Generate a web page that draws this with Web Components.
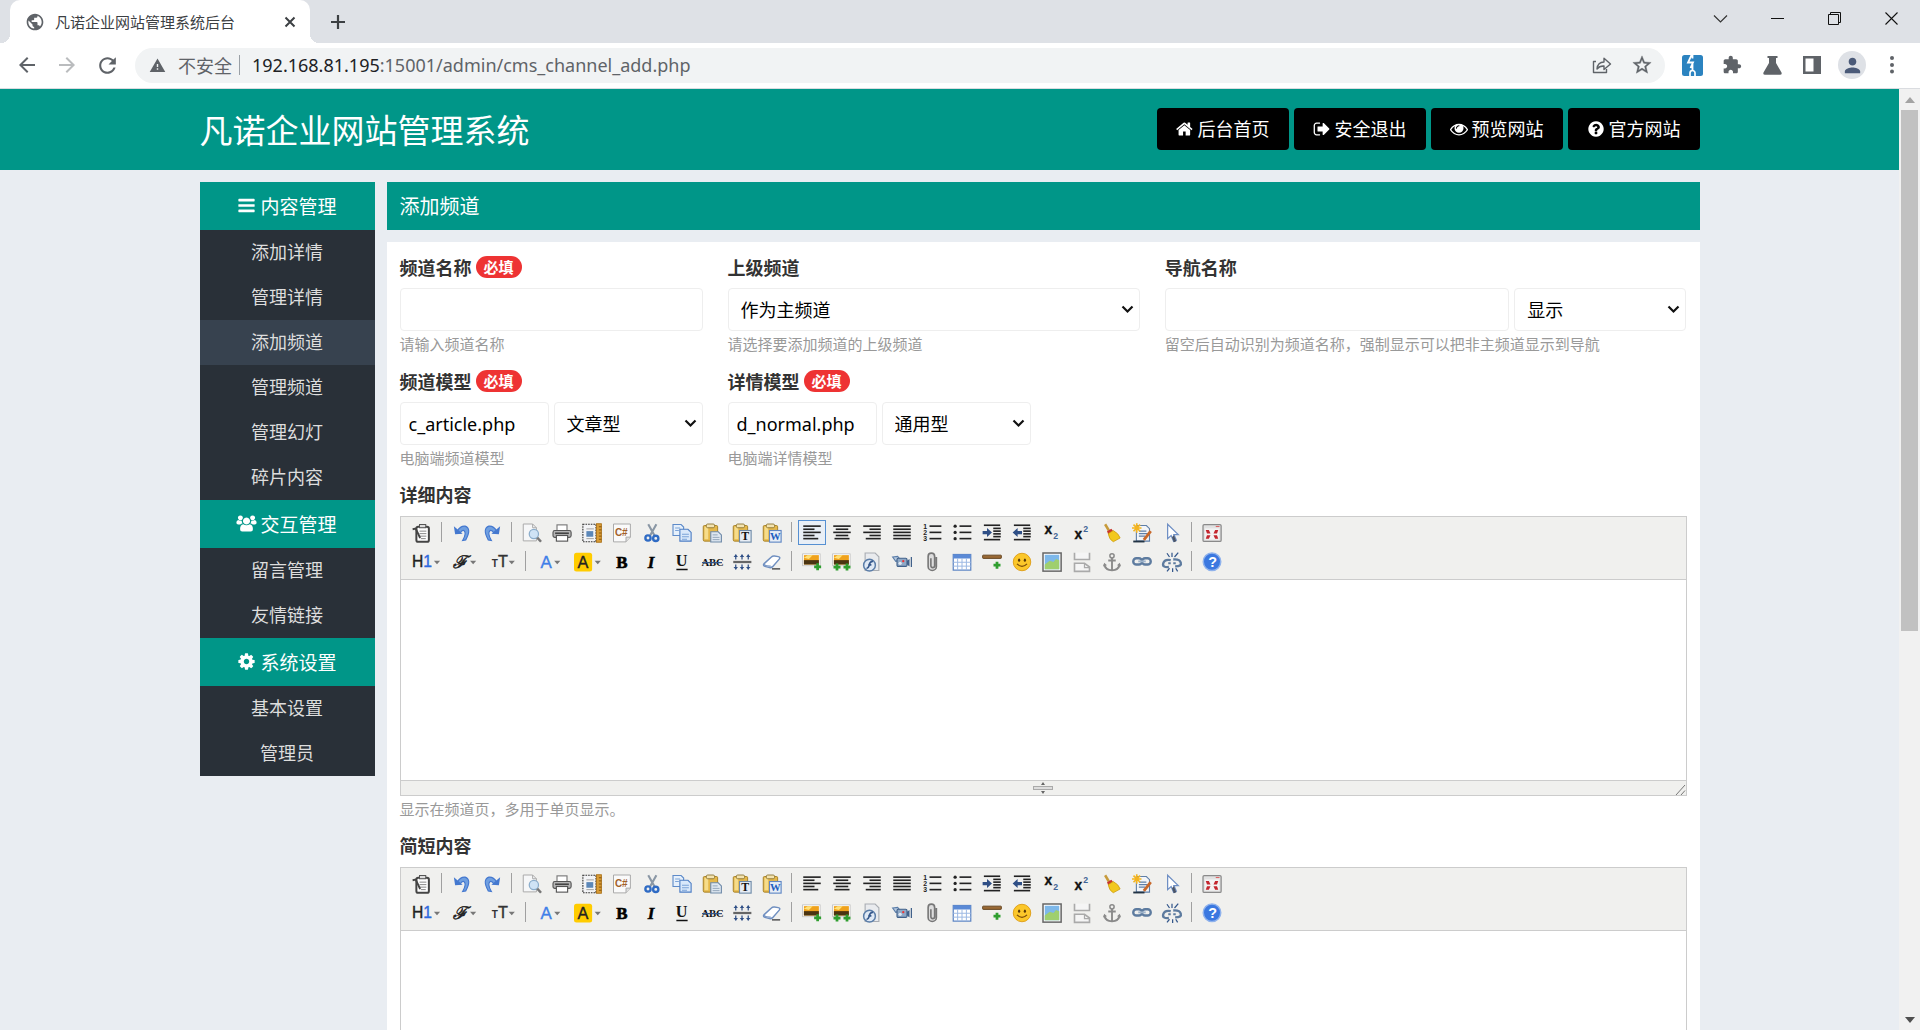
<!DOCTYPE html>
<html lang="zh-CN">
<head>
<meta charset="utf-8">
<title>凡诺企业网站管理系统后台</title>
<style>
html, body { margin: 0; height: 100%; overflow: hidden; }
body { font-family: "Open Sans", "Noto Sans CJK SC", sans-serif; font-size: 18px; color: #333; }
</style>
</head>
<body>
<browser-window>
  <admin-header></admin-header>
  <admin-body></admin-body>
</browser-window>
<script>
const define = (name, html, setup) => customElements.define(name, class extends HTMLElement {
  connectedCallback() {
    if (this.shadowRoot) return;
    const root = this.attachShadow({ mode: 'open' });
    root.innerHTML = '<style>*{box-sizing:border-box}</style>' + (typeof html === 'function' ? html(this) : html);
    if (setup) setup(this, root);
  }
});

/* ---------- solid glyph icons ---------- */
const GLYPHS = {
  home: 'M1408 992v480q0 26-19 45t-45 19h-384v-384h-256v384h-384q-26 0-45-19t-19-45v-480q0-1 .5-3t.5-3l575-474 575 474q1 2 1 6zm223-69l-62 74q-8 9-21 11h-3q-13 0-21-7l-692-577-692 577q-12 8-24 7-13-2-21-11l-62-74q-8-10-7-23.5t11-21.5l719-599q32-26 76-26t76 26l244 204v-195q0-14 9-23t23-9h192q14 0 23 9t9 23v408l219 182q10 8 11 21.5t-7 23.5z',
  bars: 'M1664 1344v128q0 26-19 45t-45 19h-1408q-26 0-45-19t-19-45v-128q0-26 19-45t45-19h1408q26 0 45 19t19 45zm0-512v128q0 26-19 45t-45 19h-1408q-26 0-45-19t-19-45v-128q0-26 19-45t45-19h1408q26 0 45 19t19 45zm0-512v128q0 26-19 45t-45 19h-1408q-26 0-45-19t-19-45v-128q0-26 19-45t45-19h1408q26 0 45 19t19 45z',
  exit: 'M704 1440q0 4 1 20t.5 26.5-3 23.5-10 19.5-20.5 6.5h-320q-119 0-203.5-84.5t-84.5-203.5v-704q0-119 84.5-203.5t203.5-84.5h320q13 0 22.5 9.5t9.5 22.5q0 4 1 20t.5 26.5-3 23.5-10 19.5-20.5 6.5h-320q-66 0-113 47t-47 113v704q0 66 47 113t113 47h312l11.5 1 11.5 3 8 5.5 7 9 2 13.5zm928-544q0 26-19 45l-544 544q-19 19-45 19t-45-19-19-45v-288h-448q-26 0-45-19t-19-45v-384q0-26 19-45t45-19h448v-288q0-26 19-45t45-19 45 19l544 544q19 19 19 45z',
  eye: 'M1664 960q-152-236-381-353 61 104 61 225 0 185-131.5 316.5t-316.5 131.5-316.5-131.5-131.5-316.5q0-121 61-225-229 117-381 353 133 205 333.5 326.5t434.5 121.5 434.5-121.5 333.5-326.5zm-720-384q0-20-14-34t-34-14q-125 0-214.5 89.5t-89.5 214.5q0 20 14 34t34 14 34-14 14-34q0-86 61-147t147-61q20 0 34-14t14-34zm848 384q0 34-20 69-140 230-376.5 368.5t-499.5 138.5-499.5-139-376.5-368q-20-35-20-69t20-69q140-229 376.5-368t499.5-139 499.5 139 376.5 368q20 35 20 69z',
  help: 'M1024 1376v-192q0-14-9-23t-23-9h-192q-14 0-23 9t-9 23v192q0 14 9 23t23 9h192q14 0 23-9t9-23zm256-672q0-88-55.5-163t-138.5-116-170-41q-243 0-371 213-15 24 8 42l132 100q7 6 19 6 16 0 25-12 53-68 86-92 34-24 86-24 48 0 85.5 26t37.5 59q0 38-20 61t-68 45q-63 28-115.5 86.5t-52.5 125.5v36q0 14 9 23t23 9h192q14 0 23-9t9-23q0-19 21.5-49.5t54.5-49.5q32-18 49-28.5t46-35 44.5-48 28-60.5 12.5-81zm384 192q0 209-103 385.5t-279.5 279.5-385.5 103-385.5-103-279.5-279.5-103-385.5 103-385.5 279.5-279.5 385.5-103 385.5 103 279.5 279.5 103 385.5z',
  cog: 'M1152 896q0-106-75-181t-181-75-181 75-75 181 75 181 181 75 181-75 75-181zm512-109v222q0 12-8 23t-20 13l-185 28q-19 54-39 91 35 50 107 138 10 12 10 25t-9 23q-27 37-99 108t-94 71q-12 0-26-9l-138-108q-44 23-91 38-16 136-29 186-7 28-36 28h-222q-14 0-24.5-8.5t-11.5-21.5l-28-184q-49-16-90-37l-141 107q-10 9-25 9-14 0-25-11-126-114-165-168-7-10-7-23 0-12 8-23 15-21 51-66.5t54-70.5q-27-50-41-99l-183-27q-13-2-21-12.5t-8-23.5v-222q0-12 8-23t19-13l186-28q14-46 39-92-40-57-107-138-10-12-10-24 0-10 9-23 26-36 98.5-107.5t94.5-71.5q13 0 26 10l138 107q44-23 91-38 16-136 29-186 7-28 36-28h222q14 0 24.5 8.5t11.5 21.5l28 184q49 16 90 37l142-107q9-9 24-9 13 0 25 10 129 119 165 170 7 8 7 22 0 12-8 23-15 21-51 66.5t-54 70.5q26 50 41 98l183 28q13 2 21 12.5t8 23.5z',
  users: 'M896 330a330 330 0 1 1-.1 0zM320 130a230 230 0 1 1-.1 0zM1472 130a230 230 0 1 1-.1 0zM590 960q140 100 306 100t306-100q300 60 300 470 0 230-200 230h-812q-200 0-200-230 0-410 300-470zM110 570q90 60 210 60 60 0 120-25-5 170 80 290-140 10-210 95h-190q-180 0-180-170 0-200 170-250zM1682 570q-90 60-210 60-60 0-120-25 5 170-80 290 140 10 210 95h190q180 0 180-170 0-200-170-250z'
};
define('glyph-icon', el => `<style>
  :host{display:inline-flex;width:1em;height:1em;flex:none} svg{width:100%;height:100%;overflow:visible}
  </style><svg viewBox="0 0 1792 1792" fill="currentColor" aria-hidden="true"><path d="${GLYPHS[el.getAttribute('name')]}"/></svg>`);

/* ---------- browser frame ---------- */
define('browser-window', `<style>
  :host{display:flex;flex-direction:column;height:100vh;background:#fff}
  .view{flex:1;min-height:0;display:flex}
  .page{flex:1;min-width:0;overflow:hidden;background:#e9edf2}
</style>
<tab-strip></tab-strip><nav-toolbar></nav-toolbar>
<div class="view"><div class="page"><slot></slot></div><page-scrollbar></page-scrollbar></div>`);

define('tab-strip', `<style>
  :host{display:flex;height:43px;background:#dee1e6;color:#3c4043}
  button{border:0;background:none;padding:0;color:inherit;display:flex;align-items:center;justify-content:center}
  .tab{width:300px;margin-left:10px;background:#fff;border-radius:10px 10px 0 0;display:flex;align-items:center;padding:0 10px 0 15px;font-size:15px;position:relative}
  .tab::before,.tab::after{content:"";position:absolute;bottom:0;width:9px;height:9px}
  .tab::before{left:-9px;background:radial-gradient(circle at 0 0,transparent 9px,#fff 9px)}
  .tab::after{right:-9px;background:radial-gradient(circle at 100% 0,transparent 9px,#fff 9px)}
  .tab span{flex:1;margin-left:10px}
  .new{width:30px;margin-left:13px;height:43px}
  .win{margin-left:auto;display:flex;height:37px;color:#111}
  .win button{width:57px}
</style>
<div class="tab">
  <svg width="20" height="20" viewBox="0 0 24 24" fill="#5f6368"><path d="M12 2C6.480 2 2 6.480 2 12s4.480 10 10 10 10-4.480 10-10S17.520 2 12 2zm-1 17.930c-3.950-.490-7-3.850-7-7.930 0-.620.080-1.210.210-1.790L9 15v1c0 1.100.900 2 2 2v1.930zm6.900-2.540c-.260-.810-1-1.390-1.900-1.390h-1v-3c0-.550-.450-1-1-1H8v-2h2c.550 0 1-.450 1-1V7h2c1.100 0 2-.900 2-2v-.410c2.930 1.190 5 4.060 5 7.410 0 2.080-.800 3.970-2.100 5.390z"/></svg>
  <span>凡诺企业网站管理系统后台</span>
  <button aria-label="关闭标签页"><svg width="20" height="20" viewBox="0 0 20 20" stroke="#3c4043" stroke-width="2"><path d="M5.500 5.500l9 9M14.500 5.500l-9 9"/></svg></button>
</div>
<button class="new" aria-label="新标签页"><svg width="16" height="16" viewBox="0 0 16 16" stroke="#3c4043" stroke-width="2.200"><path d="M8 1v14M1 8h14"/></svg></button>
<div class="win">
  <button aria-label="搜索标签页"><svg width="15" height="15" viewBox="0 0 15 15" fill="none" stroke="#333" stroke-width="1.200"><path d="M1 4.500l6.500 6.500L14 4.500"/></svg></button>
  <button aria-label="最小化"><svg width="13" height="13" viewBox="0 0 13 13" fill="none" stroke="#111"><path d="M0 6.500h13"/></svg></button>
  <button aria-label="还原"><svg width="13" height="13" viewBox="0 0 13 13" fill="none" stroke="#111"><path d="M.5 2.500h10v10H.5zM2.500 2.500v-2h10v10h-2"/></svg></button>
  <button aria-label="关闭"><svg width="13" height="13" viewBox="0 0 13 13" fill="none" stroke="#111" stroke-width="1.100"><path d="M.5.5l12 12M12.500.5l-12 12"/></svg></button>
</div>`);

define('nav-toolbar', `<style>
  :host{display:flex;align-items:center;height:46px;padding:0 8px 1px 7px;border-bottom:1px solid #dadce0;color:#5f6368}
  button{border:0;background:none;padding:0;width:40px;height:36px;display:flex;align-items:center;justify-content:center;color:inherit;flex:none}
  .omni{flex:1;min-width:0;height:35px;border-radius:18px;background:#f1f3f4;display:flex;align-items:center;margin:0 7px 0 8px;padding:0 3px 0 14px;font-size:18px}
  .safe{margin:0 7px 0 12px}
  i{width:1px;height:20px;background:#9aa0a6;margin-right:12px}
  .url{flex:1;outline:0;white-space:nowrap;font-family:"Noto Sans",sans-serif;font-size:18px;line-height:24px}
  .url b{font-weight:400;color:#202124}
  .me{width:28px;height:28px;border-radius:50%;background:#dee1e6;display:flex;align-items:center;justify-content:center}
</style>
<button aria-label="后退"><svg width="24" height="24" viewBox="0 0 24 24" fill="#5f6368"><path d="M20 11H7.830l5.590-5.590L12 4l-8 8 8 8 1.410-1.410L7.830 13H20v-2z"/></svg></button>
<button aria-label="前进"><svg width="24" height="24" viewBox="0 0 24 24" fill="#babcbe"><path d="M4 11h12.170l-5.590-5.590L12 4l8 8-8 8-1.410-1.410L16.170 13H4v-2z"/></svg></button>
<button aria-label="重新加载"><svg width="25" height="25" viewBox="0 0 24 24" fill="#5f6368"><path d="M17.650 6.350C16.200 4.900 14.210 4 12 4c-4.420 0-7.990 3.580-7.990 8s3.570 8 7.990 8c3.730 0 6.840-2.550 7.730-6h-2.080c-.820 2.330-3.040 4-5.650 4-3.310 0-6-2.690-6-6s2.690-6 6-6c1.660 0 3.140.690 4.220 1.780L13 11h7V4l-2.350 2.350z"/></svg></button>
<div class="omni">
  <svg width="17" height="17" viewBox="0 0 24 24" fill="#5f6368"><path d="M1 21h22L12 2 1 21zm12-3h-2v-2h2v2zm0-4h-2v-4h2v4z"/></svg>
  <span class="safe">不安全</span><i></i>
  <div class="url" role="textbox" contenteditable="true" spellcheck="false" aria-label="地址栏"><b>192.168.81.195</b>:15001/admin/cms_channel_add.php</div>
  <button aria-label="分享"><svg width="20" height="20" viewBox="0 0 20 20" fill="none" stroke="#5f6368" stroke-width="1.400"><path d="M4 6.500H1.500v11h13V14M5 14c.5-5 3.500-7 7-7V3.200L18.500 9 12 14.500V11c-3.500-.2-5.500 1-7 3z" stroke-linejoin="round"/></svg></button>
  <button aria-label="收藏"><svg width="22" height="22" viewBox="0 0 24 24" fill="#5f6368"><path stroke="#5f6368" stroke-width=".4" d="M22 9.240l-7.190-.620L12 2 9.190 8.630 2 9.240l5.460 4.730L5.820 21 12 17.270 18.180 21l-1.630-7.030L22 9.240zM12 15.400l-3.760 2.270 1-4.280-3.320-2.880 4.380-.380L12 6.100l1.710 4.040 4.380.380-3.320 2.880 1 4.280L12 15.400z"/></svg></button>
</div>
<button aria-label="扩展一"><svg width="21" height="21" viewBox="0 0 21 21"><rect width="21" height="21" rx="2.500" fill="#2b83c0"/><path d="M9.500 0L6 7.500h5L8.500 13M10.500 0v3.500M10.500 9v6" stroke="#fff" stroke-width="1.800" fill="none"/><path d="M8 21v-3a2.500 2.500 0 0 1 5 0v3" stroke="#fff" stroke-width="1.700" fill="none"/></svg></button>
<button aria-label="扩展程序"><svg width="20" height="20" viewBox="0 0 24 24" fill="#5f6368"><path d="M20.500 11H19V7c0-1.100-.9-2-2-2h-4V3.500C13 2.120 11.880 1 10.500 1S8 2.120 8 3.500V5H4c-1.100 0-1.990.9-1.990 2v3.800H3.500c1.490 0 2.700 1.210 2.700 2.700s-1.210 2.700-2.700 2.700H2V20c0 1.100.9 2 2 2h3.800v-1.500c0-1.490 1.210-2.700 2.700-2.700 1.490 0 2.700 1.210 2.700 2.700V22H17c1.100 0 2-.9 2-2v-4h1.500c1.380 0 2.500-1.120 2.500-2.500S21.880 11 20.500 11z"/></svg></button>
<button aria-label="实验"><svg width="19" height="19" viewBox="0 0 19 19" fill="#5f6368"><path d="M4.500 0h10v2H13v5l5.500 9.500q.8 2.300-1.500 2.300H2q-2.300 0-1.500-2.300L6 7V2H4.500z"/></svg></button>
<button aria-label="侧边栏"><svg width="18" height="18" viewBox="0 0 18 18"><path fill="#5f6368" fill-rule="evenodd" d="M0 0h18v18H0zM2.500 2.500v13h8v-13z"/></svg></button>
<button aria-label="用户"><span class="me"><svg width="23" height="23" viewBox="0 0 24 24" fill="#4a5a78"><path d="M12 12c2.210 0 4-1.790 4-4s-1.790-4-4-4-4 1.790-4 4 1.790 4 4 4zm0 2c-2.670 0-8 1.340-8 4v2h16v-2c0-2.660-5.330-4-8-4z"/></svg></span></button>
<button aria-label="菜单"><svg width="4" height="18" viewBox="0 0 4 18" fill="#5f6368"><circle cx="2" cy="2" r="2"/><circle cx="2" cy="9" r="2"/><circle cx="2" cy="15.500" r="2"/></svg></button>`);

define('page-scrollbar', `<style>
  :host{display:flex;flex-direction:column;width:21px;background:#f1f1f1;padding:0 2px}
  .b{height:21px;display:flex;align-items:center;justify-content:center}
  .track{flex:1} .thumb{height:58%;background:#c1c1c1}
</style>
<div class="b"><svg width="10" height="6"><path d="M0 6l5-6 5 6z" fill="#a3a3a3"/></svg></div>
<div class="track"><div class="thumb"></div></div>
<div class="b"><svg width="10" height="6"><path d="M0 0l5 6 5-6z" fill="#505050"/></svg></div>`);

/* ---------- site header ---------- */
define('admin-header', `<style>
  :host{display:block;background:#009688;color:#fff}
  .in{max-width:1500px;height:81px;padding-bottom:2px;margin:0 auto;display:flex;align-items:center;justify-content:space-between}
  h1{margin:0;font-size:33px;font-weight:400;line-height:48px;padding-top:4px}
  nav{display:flex;gap:5px}
</style>
<div class="in"><h1>凡诺企业网站管理系统</h1>
<nav><header-link icon="home">后台首页</header-link><header-link icon="exit">安全退出</header-link><header-link icon="eye">预览网站</header-link><header-link icon="help">官方网站</header-link></nav></div>`);
define('header-link', el => `<style>
  :host{display:block}
  a{display:flex;align-items:center;gap:4px;height:42px;padding:0 19px;background:#000;color:#fff;border-radius:4px;text-decoration:none;font-size:18px;line-height:42px}
</style><a href="#"><glyph-icon name="${el.getAttribute('icon')}"></glyph-icon><slot></slot></a>`);

/* ---------- body ---------- */
define('admin-body', `<style>
  :host{display:flex;max-width:1500px;margin:12px auto 0;gap:12px;align-items:flex-start}
  main{flex:1;min-width:0}
  h2{margin:0 0 12px;height:48px;line-height:50px;padding:0 13px;background:#009688;color:#fff;font-size:20px;font-weight:400}
</style>
<side-menu></side-menu>
<main><h2>添加频道</h2><channel-form></channel-form></main>`);

define('side-menu', `<style>:host{display:block;flex:none;width:175px;background:#293038}</style>
<menu-group icon="bars" label="内容管理" items="添加详情,管理详情,添加频道,管理频道,管理幻灯,碎片内容" active="添加频道"></menu-group>
<menu-group icon="users" label="交互管理" items="留言管理,友情链接"></menu-group>
<menu-group icon="cog" label="系统设置" items="基本设置,管理员"></menu-group>`);
define('menu-group', el => `<style>
  :host{display:block;text-align:center}
  h3{margin:0;height:48px;padding-bottom:1px;background:#009688;color:#fff;font-size:19px;font-weight:400;display:flex;align-items:center;justify-content:center;gap:4px}
  a{display:block;height:45px;line-height:45px;color:#ddd;text-decoration:none;font-size:18px}
  a.on{background:#37424f}
</style><h3><glyph-icon name="${el.getAttribute('icon')}"></glyph-icon>${el.getAttribute('label')}</h3>` +
  el.getAttribute('items').split(',').map(t => `<a href="#"${t === el.getAttribute('active') ? ' class="on" aria-current="page"' : ''}>${t}</a>`).join(''));

define('required-badge', `<style>
  :host{display:inline-flex;align-items:center;height:22px;padding:0 8px;border-radius:11px;background:#e33;color:#fff;font-size:15px;font-weight:700;line-height:22px}
</style>必填`);

define('form-field', `<style>
  :host{display:block}
  .label{display:flex;align-items:center;gap:4px;height:24px;margin-bottom:9px;font-weight:700}
  .row{display:grid;grid-template-columns:var(--cols,1fr);gap:5px}
  .hint{height:28px;line-height:26px;font-size:15px;color:#999;white-space:nowrap}
</style>
<div class="label"><slot name="label"></slot></div>
<div class="row"><slot></slot></div>
<div class="hint"><slot name="hint"></slot></div>`);

define('select-box', `<style>
  :host{display:grid;align-items:center;min-width:0}
  ::slotted(select),svg{grid-area:1/1}
  svg{justify-self:end;margin-right:6px;pointer-events:none}
</style><slot></slot><svg width="13" height="9" viewBox="0 0 13 9" fill="none" stroke="#111" stroke-width="2.200"><path d="M1.500 1.500l5 5 5-5"/></svg>`);

define('channel-form', `<style>
  :host{display:block;background:#fff;padding:13px 13px 40px}
  form{display:grid;grid-template-columns:repeat(12,minmax(0,1fr));column-gap:25px;row-gap:10px}
  .s3{grid-column:span 3} .s4{grid-column:span 4} .s5{grid-column:span 5} .s12{grid-column:1/-1} .new{grid-column:1/span 3}
  .half{--cols:1fr 1fr} .third{--cols:2fr 1fr}
  input,select{appearance:none;width:100%;min-width:0;height:43px;margin:0;border:1px solid #eee;border-radius:4px;background:#fff;color:#000;font:inherit;padding:0 8px;outline:0}
  input{font-family:"Noto Sans","Noto Sans CJK SC",sans-serif}
  select{padding:0 24px 0 12px}
</style>
<form>
  <form-field class="s3"><label slot="label" for="name">频道名称</label><required-badge slot="label"></required-badge>
    <input id="name"><span slot="hint">请输入频道名称</span></form-field>
  <form-field class="s4"><label slot="label" for="parent">上级频道</label>
    <select-box><select id="parent"><option>作为主频道</option></select></select-box><span slot="hint">请选择要添加频道的上级频道</span></form-field>
  <form-field class="s5 third"><label slot="label" for="nav">导航名称</label>
    <input id="nav"><select-box><select aria-label="导航显示"><option>显示</option></select></select-box><span slot="hint">留空后自动识别为频道名称，强制显示可以把非主频道显示到导航</span></form-field>
  <form-field class="new half"><label slot="label" for="cm">频道模型</label><required-badge slot="label"></required-badge>
    <input id="cm" value="c_article.php"><select-box><select aria-label="频道模型类型"><option>文章型</option></select></select-box><span slot="hint">电脑端频道模型</span></form-field>
  <form-field class="s3 half"><label slot="label" for="dm">详情模型</label><required-badge slot="label"></required-badge>
    <input id="dm" value="d_normal.php"><select-box><select aria-label="详情模型类型"><option>通用型</option></select></select-box><span slot="hint">电脑端详情模型</span></form-field>
  <rich-editor class="s12" label="详细内容" hint="显示在频道页，多用于单页显示。" active="justifyleft"></rich-editor>
  <rich-editor class="s12" label="简短内容" hint=""></rich-editor>
</form>`);

/* ---------- editor toolbar icons, drawn on a 16-unit grid ---------- */
const lines = rows => rows.map(([x, y, w]) => `<path d="M${x} ${y}h${w}" stroke="#222" stroke-width="1.3"/>`).join('');
const caret = x => `<path d="M${x} 7h5l-2.500 2.800z" fill="#777"/>`;
const board = '<rect x="1" y="2" width="11.500" height="12.500" rx="1" fill="#e5b84a" stroke="#a8842c" stroke-width=".8"/><path d="M2 3h3v10H2z" fill="#f6dc8a"/><rect x="3.500" y=".8" width="6.500" height="3" rx="1" fill="#f3e3b0" stroke="#8a7230" stroke-width=".7"/>';
const photo = (x, w) => `<rect x="${x}" y="1.500" width="${w}" height="9.500" fill="#fff" stroke="#bbb" stroke-width=".6"/><rect x="${x + 1}" y="2.500" width="${w - 2}" height="7.500" fill="#f0a21c"/><path d="M${x + 1} 6.500h${w - 2}v3.500h-${w - 2}z" fill="#4a3412"/><path d="M${x + 1} 4.500l3-2h4l-3 3z" fill="#ffe27a"/>`;
const plus = (x, y) => `<path d="M${x} ${y - 2.8}v5.600M${x - 2.8} ${y}h5.600" stroke="#2f9e2f" stroke-width="2.200"/>`;
const chain = '<rect x="1" y="6" width="7" height="5" rx="2.500" fill="none" stroke="#5d7b9f" stroke-width="1.900"/><rect x="8" y="6" width="7" height="5" rx="2.500" fill="none" stroke="#5d7b9f" stroke-width="1.900"/><path d="M5 8.500h6" stroke="#9fb4cb" stroke-width="1.500"/>';
const ICONS = {
  source: '<rect x="3.500" y="3" width="10" height="12" rx="1.500" fill="#fff" stroke="#444" stroke-width="1.600"/><rect x="6" y="1.200" width="5" height="2.600" fill="#ddd" stroke="#555" stroke-width=".8"/><path d="M6 6.500h5.500M6 8.500h5.500M6 10.500h5.500M7 12.500h4" stroke="#888" stroke-width=".8"/><path d="M.5 5l2.500-.5L6.500 12" stroke="#444" stroke-width="1.500" fill="none"/>',
  undo: '<path d="M4 6.500Q7 2 10.500 2.500 16 4.500 11 13.500L8.500 14Q12 8 9.500 6 8 5.500 6.500 8z" fill="#6f9fe0" stroke="#4478cf" stroke-width=".9"/><path d="M1.500 2.500l1 6.500 6-.5z" fill="#4478cf"/>',
  redo: '<path d="M12 6.500Q9 2 5.500 2.500 0 4.500 5 13.500L7.500 14Q4 8 6.500 6 8 5.500 9.500 8z" fill="#6f9fe0" stroke="#4478cf" stroke-width=".9"/><path d="M14.500 2.500l-1 6.500-6-.5z" fill="#4478cf"/>',
  preview: '<path d="M1 .8h7.500l3 3v10.500H1z" fill="#f6f7f8" stroke="#aaa" stroke-width=".8"/><path d="M8.500.8v3h3" fill="none" stroke="#aaa" stroke-width=".8"/><circle cx="9.500" cy="8.800" r="3.700" fill="#cfe3f5" stroke="#8badcb" stroke-width="1"/><path d="M12.200 11.700l3 3.300" stroke="#777" stroke-width="2"/>',
  print: '<rect x="4" y="1.500" width="8" height="5" fill="#fff" stroke="#777" stroke-width=".9"/><rect x=".8" y="6" width="14.500" height="5.500" rx="1.500" fill="#b5b5b5" stroke="#555" stroke-width=".9"/><path d="M2.500 8.200h11" stroke="#444" stroke-width="1.300"/><rect x="3.500" y="10" width="9" height="4.500" fill="#fff" stroke="#555" stroke-width=".9"/>',
  template: '<rect x=".7" y="1" width="10.500" height="14" fill="#f3f4f6" stroke="#333" stroke-width=".9" stroke-dasharray="1.300 .8"/><rect x="3.500" y="6.500" width="5.500" height="4.500" fill="#5b87b8"/><path d="M3.500 4.700h6M3.500 12.500h6" stroke="#999" stroke-width=".7"/><rect x="11.500" y=".6" width="4" height="14.800" fill="#d99c35" stroke="#a86e14" stroke-width=".7"/><path d="M13.500 3h2M13.500 5.500h2M13.500 8h2M13.500 10.500h2M13.500 13h2" stroke="#7b4d08" stroke-width=".7"/>',
  code: '<path d="M1.200.8h13.500v10.500l-3.500 3.800h-10z" fill="#fafafa" stroke="#aaa" stroke-width=".8"/><path d="M14.700 11.300h-3.500v3.800" fill="#ddd" stroke="#aaa" stroke-width=".8"/><text x="2.300" y="10.300" font-family="Liberation Sans" font-size="8" font-weight="700" fill="#a3612a">C#</text>',
  cut: '<path d="M5 1l5 9M11.500 1L6.500 10" stroke="#8a97a5" stroke-width="1.700"/><circle cx="4.800" cy="12" r="2.100" fill="none" stroke="#2f6bc4" stroke-width="1.900"/><circle cx="11" cy="12.300" r="2.100" fill="none" stroke="#2f6bc4" stroke-width="1.900"/>',
  copy: '<path d="M.8 1.200h6.500l2 2V10H.8z" fill="#e6f0fb" stroke="#5e8bc9" stroke-width=".9"/><path d="M6.300 5h6.500l2.500 2.500v7H6.300z" fill="#d9e8fa" stroke="#4f7fc4" stroke-width=".9"/><path d="M2.500 4h4M2.500 6h3M8 9h5.500M8 11h5.500M8 13h4" stroke="#7ba3d8" stroke-width=".9"/>',
  paste: board + '<path d="M7 7h6l2.500 2.500v5.700H7z" fill="#dfe8f1" stroke="#6f8aa8" stroke-width=".9"/><path d="M8.500 9.500h4M8.500 11.500h5.500M8.500 13.300h5.500" stroke="#8a9fb5" stroke-width=".7"/>',
  plain: board + '<rect x="6" y="6" width="9.300" height="9.300" fill="#e7edf5" stroke="#6f8aa8" stroke-width=".9"/><text x="7.400" y="13.800" font-family="Liberation Serif" font-size="9.500" font-weight="700" fill="#111">T</text>',
  word: board + '<rect x="6" y="6" width="9.300" height="9.300" fill="#e7edf5" stroke="#5f86c4" stroke-width=".9"/><text x="6.300" y="13.600" font-family="Liberation Serif" font-size="8.500" font-weight="700" fill="#1f5fc0">W</text>',
  justifyleft: lines([[1, 2.500, 14], [1, 5, 9], [1, 7.500, 14], [1, 10, 9], [1, 12.500, 12]]),
  justifycenter: lines([[1, 2.500, 14], [3, 5, 10], [1, 7.500, 14], [3, 10, 10], [2, 12.500, 12]]),
  justifyright: lines([[1, 2.500, 14], [6, 5, 9], [1, 7.500, 14], [6, 10, 9], [3, 12.500, 12]]),
  justifyfull: lines([[1, 2.500, 14], [1, 5, 14], [1, 7.500, 14], [1, 10, 14], [1, 12.500, 14]]),
  ol: lines([[6, 2.500, 9.500], [6, 7.500, 9.500], [6, 12.500, 9.500]]) + '<g font-family="Liberation Sans" font-size="5.500" font-weight="700" fill="#222"><text x="1" y="4.500">1</text><text x="1" y="9.500">2</text><text x="1" y="14.500">3</text></g>',
  ul: lines([[6, 2.500, 9.500], [6, 7.500, 9.500], [6, 12.500, 9.500]]) + '<g fill="#222"><circle cx="2.500" cy="2.500" r="1.300"/><circle cx="2.500" cy="7.500" r="1.300"/><circle cx="2.500" cy="12.500" r="1.300"/></g>',
  indent: lines([[1.500, 1.800, 13], [9, 4.300, 6], [9, 6.500, 6], [9, 8.700, 6], [9, 10.900, 6], [1.500, 13.300, 13]]) + '<path d="M.5 6.300h3.500V4l4 3.600-4 3.600V9H.5z" fill="#2f4f86"/>',
  outdent: lines([[1.500, 1.800, 13], [9, 4.300, 6], [9, 6.500, 6], [9, 8.700, 6], [9, 10.900, 6], [1.500, 13.300, 13]]) + '<path d="M8 6.300H4.500V4l-4 3.600 4 3.600V9H8z" fill="#2f4f86"/>',
  sub: '<text x="2" y="8.500" font-family="Liberation Sans" font-size="11" font-weight="700" fill="#111" stroke="#111" stroke-width=".3">x</text><text x="9" y="12.500" font-family="Liberation Sans" font-size="7" font-weight="700" fill="#3f6596">2</text>',
  sup: '<text x="2" y="13" font-family="Liberation Sans" font-size="11" font-weight="700" fill="#111" stroke="#111" stroke-width=".3">x</text><text x="9" y="7.500" font-family="Liberation Sans" font-size="7" font-weight="700" fill="#3f6596">2</text>',
  broom: '<path d="M2.500 1l3 5" stroke="#c79a3a" stroke-width="2"/><path d="M4 6.500l3.500-2 1.500 2-4 2.500z" fill="#c9352b"/><path d="M5 8.500L9 6q4.500 2.500 5.500 6l-5.500 3q-3.500-2-4-6.500z" fill="#f2c81e" stroke="#c99a10" stroke-width=".6"/>',
  quick: '<path d="M3.500 2h8l2.500 2.500v10H3.500z" fill="#f3f5f8" stroke="#5f7fa8" stroke-width=".9"/><path d="M5.500 6.500h6M5.500 8.500h7M5.500 10.500h5" stroke="#5f7fa8" stroke-width=".9"/><path d="M1 14.800h9" stroke="#234" stroke-width="1.500"/><path d="M15 6.500l-5.500 7" stroke="#c9682a" stroke-width="2.300"/><path d="M3.800.2v7.600M0 4h7.600M1.200 1.300l5.300 5.300M6.500 1.300L1.200 6.600" stroke="#f4b41e" stroke-width="1.300"/>',
  select: '<path d="M4.500 1v11.500l2.800-2.500 2 4.800 2.200-1-2-4.600h3.500z" fill="#fff" stroke="#6f8fc4" stroke-width="1"/><path d="M9.500 9.500l2 5-2 .8-1.500-4z" fill="#4a5568"/>',
  full: '<rect x=".8" y="1.200" width="14.500" height="13.500" rx="1" fill="#e2e2e2" stroke="#8a8a8a" stroke-width="1"/><rect x="2.300" y="4.300" width="11.500" height="9" fill="#f3f3f3"/><path d="M11 2.800h3" stroke="#d66" stroke-width=".9"/><path d="M3 5.500h2.500l1.300 2.800H4zM13 5.500h-2.500L9.200 8.300H12zM3 12.500h2.500l1.300-2.800H4zM13 12.500h-2.500L9.200 9.700H12z" fill="#c4262e"/>',
  h1: '<text x="0" y="12" font-family="Liberation Sans" font-size="12.500" fill="#222" stroke="#222" stroke-width=".3">H<tspan fill="#2f6be0" stroke="#2f6be0">1</tspan></text>' + caret(17.5),
  fontname: '<text x="2.500" y="12.500" font-family="DejaVu Serif" font-size="14" font-style="italic" fill="#222" stroke="#222" stroke-width=".5">ℱ</text>' + caret(16),
  fontsize: '<text x="3" y="12" font-family="Liberation Sans" font-size="8" font-weight="700" fill="#333">T</text><text x="8" y="12" font-family="Liberation Sans" font-size="13" fill="#333" stroke="#333" stroke-width=".3">T</text>' + caret(16.5),
  color: '<text x="3.500" y="12.500" font-family="Liberation Sans" font-size="13.500" fill="#3f7fe8" stroke="#3f7fe8" stroke-width=".3">A</text>' + caret(14.5),
  hilite: '<rect x="0" y=".5" width="14.500" height="15" rx="2" fill="#fc0"/><text x="2.800" y="12.500" font-family="Liberation Sans" font-size="13" fill="#222" stroke="#222" stroke-width=".3">A</text>' + caret(16.5),
  bold: '<text x="3.300" y="12.500" font-family="Liberation Serif" font-size="13.500" font-weight="700" fill="#000" stroke="#000" stroke-width=".5">B</text>',
  italic: '<text x="4.500" y="12.500" font-family="Liberation Serif" font-size="13.500" font-style="italic" font-weight="700" fill="#000" stroke="#000" stroke-width=".4">I</text>',
  under: '<text x="3" y="11.500" font-family="Liberation Serif" font-size="13" font-weight="700" fill="#111">U</text><path d="M3.500 14h9" stroke="#111" stroke-width="1.200"/>',
  strike: '<text x="-.5" y="11.500" font-family="Liberation Serif" font-size="8.500" font-weight="700" fill="#111">ABC</text><path d="M0 8.500h16" stroke="#35588c" stroke-width="1"/>',
  lineheight: '<path d="M1 8h14.500" stroke="#666" stroke-width="1.800"/><path d="M3 6V2M8 6V2M13 6V2M3 10v4M8 10v4M13 10v4" stroke="#2f4f86" stroke-width="1"/><path d="M1.200 4L3 2l1.800 2zM6.200 4L8 2l1.800 2zM11.200 4L13 2l1.800 2zM1.200 12L3 14l1.800-2zM6.200 12L8 14l1.800-2zM11.200 12L13 14l1.800-2z" fill="#2f4f86"/>',
  erase: '<path d="M1.500 9.500l6-5.500q1-1 2.500-.8l3 .5q2 .5.8 2l-5.300 6q-1 1-2.500.8l-3-.8q-2.500-.7-1.500-2.200z" fill="#fff" stroke="#6f8fc0" stroke-width="1.200"/><path d="M1.500 10q2 1.500 5.500 1.300" fill="none" stroke="#6f8fc0" stroke-width=".9"/><path d="M8 13.500h6.500" stroke="#444" stroke-width="1.100"/>',
  image: photo(.5, 14) + plus(12.5, 11.8),
  multi: photo(.5, 14) + plus(4, 12) + plus(12, 12),
  flash: '<path d="M2.500.8h8l3 3v11h-11z" fill="#e9ebee" stroke="#a9adb3" stroke-width=".9"/><circle cx="6" cy="10.500" r="4.700" fill="#dfe9f5" stroke="#5a7da8" stroke-width="1.200"/><path d="M8.800 7.500q-2.500-.2-3.200 3.500-.4 2-2 2.200M5 10.300h2.500" fill="none" stroke="#35588c" stroke-width="1.300"/>',
  media: '<path d="M.5 4l4-.5 2.500 3-4 1z" fill="#b9cbe0" stroke="#5a7da8" stroke-width=".9"/><rect x="4" y="5" width="8" height="6.500" rx="1" fill="#8fa9c6" stroke="#41618a" stroke-width=".9"/><circle cx="9" cy="7.300" r=".9" fill="#e33"/><circle cx="6.500" cy="9" r="1.300" fill="#dfe9f5"/><path d="M12 7l2-1.500v6L12 10z" fill="#41618a"/><path d="M15.500 4v8" stroke="#41618a" stroke-width="1"/>',
  file: '<path d="M11.500 4v7.500a3.300 3.300 0 0 1-6.600 0V3.500a2.600 2.600 0 0 1 5.200 0v7.500a1.500 1.500 0 0 1-3 0V5" fill="#ddd" stroke="#777" stroke-width="1.300"/>',
  table: '<rect x="1" y="2" width="14" height="12.500" fill="#fff" stroke="#5f86c4" stroke-width="1"/><rect x="1" y="2" width="14" height="3.200" fill="#5b8ad6"/><path d="M4.500 5v9.500M8 5v9.500M11.500 5v9.500M1 8.200h14M1 11.300h14" stroke="#9db9e3" stroke-width=".8"/>',
  hr: '<rect x=".5" y="2.500" width="15" height="2.600" rx=".5" fill="#9a6a35" stroke="#5d3c16" stroke-width=".7"/>' + plus(12, 10.5),
  emoji: '<circle cx="8" cy="8" r="7" fill="#fbc72a" stroke="#dd9a10" stroke-width=".7"/><ellipse cx="5.700" cy="6.500" rx=".9" ry="1.300" fill="#5a3a08"/><ellipse cx="10.300" cy="6.500" rx=".9" ry="1.300" fill="#5a3a08"/><path d="M4 9.500q4 4 8 0" fill="none" stroke="#7a4a08" stroke-width="1"/>',
  map: '<rect x=".8" y=".8" width="14.500" height="14.500" fill="#fff" stroke="#666" stroke-width="1.200"/><rect x="2.200" y="2.200" width="11.600" height="11.600" fill="#7db8ea"/><path d="M2.200 10l4-3 3 1 2-2.500 2.600 1v7.300H2.200z" fill="#9fcf6e"/>',
  pagebreak: '<path d="M2 .5v5.500h12V.5M2 15.500V9h8l4 3v3.500z" fill="#f5f5f5" stroke="#aaa" stroke-width="1.300"/><path d="M10 9v3.500h4" fill="none" stroke="#aaa"/>',
  anchor: '<circle cx="8" cy="3" r="1.700" fill="none" stroke="#8a8a8a" stroke-width="1.200"/><path d="M8 4.700v10M5 6.800h6M1.800 10q1 4.500 6.200 4.700 5.200-.2 6.200-4.700" fill="none" stroke="#8a8a8a" stroke-width="1.500"/><path d="M.8 11.500l1-3 2.200 2zM15.200 11.500l-1-3-2.200 2z" fill="#8a8a8a"/>',
  link: '<g transform="translate(0 -1)">' + chain + '</g>',
  unlink: '<path d="M7 6.500q-5-1-6 2.500t4.500 3M9 6q5-.5 6 2.500t-4.500 3" fill="none" stroke="#5d7b9f" stroke-width="1.900"/><path d="M5 9h2M9 9h2" stroke="#5d7b9f" stroke-width="1.500"/><path d="M4 1l2 3M8 .5V4M13 .5L10 4M4 15.500L6 13M8.500 13v3M11 13l1.500 2.500" stroke="#35588c" stroke-width="1"/>',
  about: '<circle cx="8" cy="7.800" r="7" fill="#3b78e0" stroke="#8fb2ec" stroke-width="1.200"/><text x="4.900" y="12" font-family="Liberation Sans" font-size="11.500" font-weight="700" fill="#fff">?</text>'
};
const ROWS = [
  'source | undo redo | preview print template code cut copy paste plain word | justifyleft justifycenter justifyright justifyfull ol ul indent outdent sub sup broom quick select | full',
  'h1 fontname fontsize | color hilite bold italic under strike lineheight erase | image multi flash media file table hr emoji map pagebreak anchor link unlink | about'
];
const WIDE = ['h1', 'fontname', 'fontsize', 'color', 'hilite'];

define('tool-button', el => {
  const n = el.getAttribute('name'), w = WIDE.includes(n);
  return `<style>
  :host{display:flex;align-items:center;justify-content:center;width:${w ? 38 : 30}px;height:29px}
  button{width:calc(100% - 2px);height:25px;padding:0;border:1px solid transparent;background:none;display:flex;align-items:center;justify-content:${w ? 'flex-start' : 'center'};${w ? 'padding-left:3px' : ''}}
  :host([on]) button{border-color:#5690d2;background:#e9eff6}
  svg{overflow:visible;flex:none}
  </style><button type="button" aria-label="${n}"><svg width="20" height="20" viewBox="0 0 16 16">${ICONS[n]}</svg></button>`;
});

define('rich-editor', el => `<style>
  :host{display:block}
  label{display:block;height:24px;line-height:24px;margin-bottom:9px;font-weight:700}
  .box{border:1px solid #ccc;background:#fff}
  .bar{background:#f0f0ee;border-bottom:1px solid #ccc;padding:1px 6px 3px}
  .row{display:flex}
  .row i{width:1px;height:20px;margin:4px 5px 0 4px;background:#a0a0a0}
  textarea{display:block;width:100%;height:200px;border:0;padding:6px;resize:none;outline:0;background:#fff}
  .status{height:15px;background:#f0f0ee;border-top:1px solid #ccc;display:grid;grid-template-columns:1fr auto 1fr;align-items:center}
  .status svg:last-child{justify-self:end;align-self:end}
  .hint{height:28px;line-height:26px;font-size:15px;color:#999}
</style>
<label for="t">${el.getAttribute('label')}</label>
<div class="box"><div class="bar">${ROWS.map(r => '<div class="row">' + r.split(' ').map(n => n === '|' ? '<i></i>' : `<tool-button name="${n}"${n === el.getAttribute('active') ? ' on' : ''}></tool-button>`).join('') + '</div>').join('')}</div>
<textarea id="t"></textarea>
<div class="status"><span></span>
<svg width="20" height="12" viewBox="0 0 20 12"><path d="M8 3l2-3 2 3zM8 9l2 3 2-3z" fill="#666"/><rect x=".5" y="4.500" width="19" height="3" fill="#ddd" stroke="#aaa"/></svg>
<svg width="11" height="11" viewBox="0 0 11 11" stroke="#777"><path d="M1 11L10 1M6 11l4-4.500"/></svg></div></div>
<div class="hint">${el.getAttribute('hint')}</div>`);
</script>
</body>
</html>
